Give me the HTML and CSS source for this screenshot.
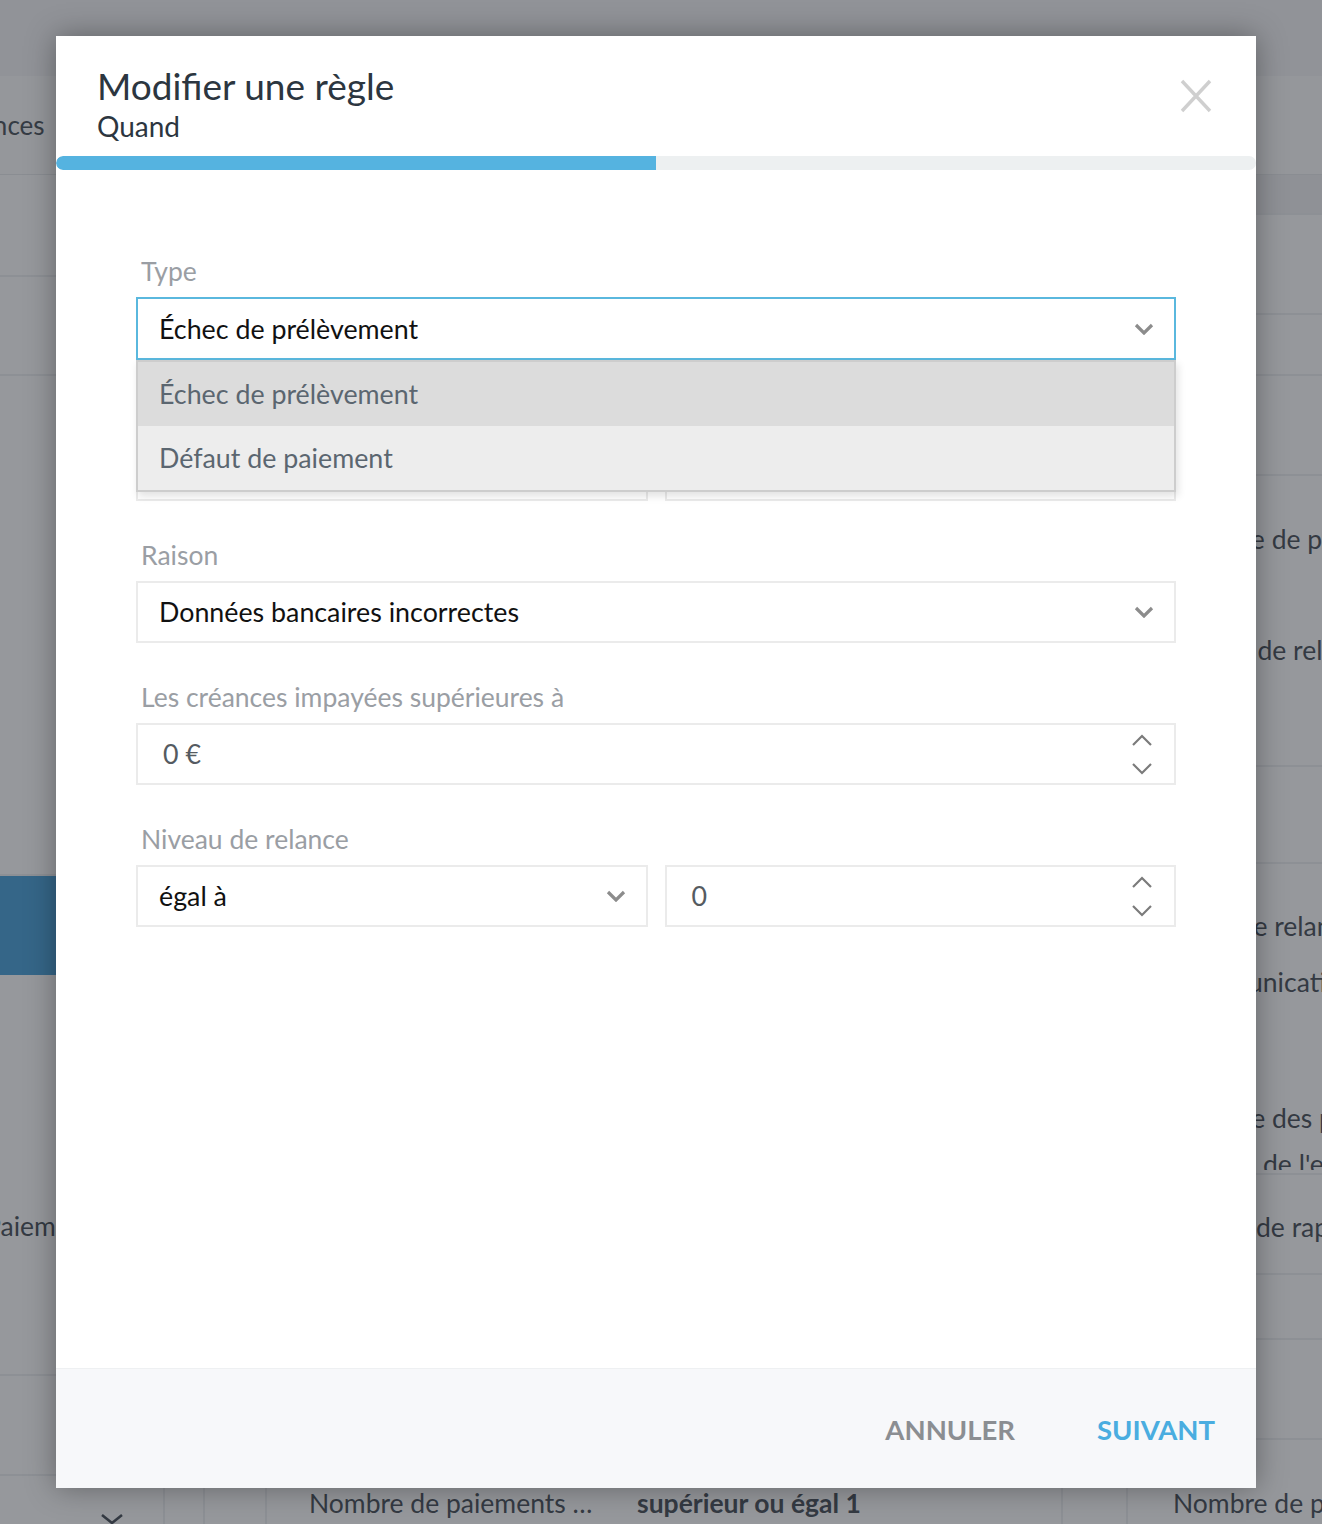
FILE: index.html
```html
<!DOCTYPE html>
<html lang="fr">
<head>
<meta charset="utf-8">
<title>Modifier une règle</title>
<link rel="stylesheet" href="styles.css">
</head>
<body>
<div class="page">
  <div class="page-header"></div>
  <div class="page-tabs"><span class="tab-text">Créances</span></div>
  <div class="page-main">
    <div class="col-left">
      <div class="lrow h102"></div>
      <div class="lrow h99"></div>
      <div class="lrow h500"></div>
      <div class="lrow h99 blue"></div>
      <div class="lrow h401"><span class="bg-text t-aieme">Paiements</span></div>
      <div class="lrow h100"></div>
      <div class="lrow last">
        <svg class="bg-chev" width="26" height="14" viewBox="0 0 26 14"><path d="M3 3 L13 11 L23 3" stroke="#3a434c" stroke-width="2.6" fill="none"/></svg>
      </div>
    </div>
    <div class="col-center">
      <div class="strip">
        <span class="cell c1"></span>
        <span class="cell c2"></span>
        <span class="cell c3">Nombre de paiements …</span>
        <span class="cell c4">supérieur ou égal 1</span>
      </div>
    </div>
    <div class="col-right">
      <div class="rrow h40 dark"></div>
      <div class="rrow h100"></div>
      <div class="rrow h61"></div>
      <div class="rrow h100"></div>
      <div class="rrow h291">
        <span class="bg-text r1">Type de prélèvement</span>
        <span class="bg-text r2">Niveau de relance</span>
      </div>
      <div class="rrow h97"></div>
      <div class="rrow h311">
        <span class="bg-text r3">Type de relance</span>
        <span class="bg-text r4">Communication</span>
        <span class="bg-text r5">Date des paiements</span>
        <span class="bg-text r6">Date de l'envoi</span>
      </div>
      <div class="rrow h100"><span class="bg-text r7">Date de rappel</span></div>
      <div class="rrow h65"></div>
      <div class="rrow h100"></div>
      <div class="rrow last">
        <div class="strip">
          <span class="cell c5"></span>
          <span class="cell c6">Nombre de paiements</span>
        </div>
      </div>
    </div>
  </div>
</div>

<div class="overlay"></div>

<div class="modal">
  <div class="modal-header">
    <div class="titles">
      <h1 class="title">Modifier une règle</h1>
      <div class="subtitle">Quand</div>
    </div>
    <button class="close" aria-label="Fermer">
      <svg width="34" height="34" viewBox="0 0 34 34"><path d="M3 2 L31 32 M31 2 L3 32" stroke="#cfcfcf" stroke-width="3.4" fill="none"/></svg>
    </button>
  </div>
  <div class="progress"><div class="progress-fill"></div></div>

  <div class="modal-body">
    <div class="field">
      <label class="label">Type</label>
      <div class="select-wrap">
        <div class="box focus">
          <span class="value">Échec de prélèvement</span>
          <svg class="chev" width="20" height="12" viewBox="0 0 20 12"><path d="M2 2 L10 10 L18 2" stroke="#8c8c8c" stroke-width="3.2" fill="none"/></svg>
        </div>
        <div class="dropdown">
          <div class="option active">Échec de prélèvement</div>
          <div class="option">Défaut de paiement</div>
        </div>
      </div>
    </div>

    <div class="field">
      <label class="label">Montant</label>
      <div class="row2">
        <div class="box"></div>
        <div class="box"></div>
      </div>
    </div>

    <div class="field">
      <label class="label">Raison</label>
      <div class="box">
        <span class="value">Données bancaires incorrectes</span>
        <svg class="chev" width="20" height="12" viewBox="0 0 20 12"><path d="M2 2 L10 10 L18 2" stroke="#8c8c8c" stroke-width="3.2" fill="none"/></svg>
      </div>
    </div>

    <div class="field">
      <label class="label">Les créances impayées supérieures à</label>
      <div class="box">
        <span class="value num">0 €</span>
        <span class="spin">
          <svg width="22" height="14" viewBox="0 0 22 14"><path d="M2 12 L11 3 L20 12" stroke="#7b7b7b" stroke-width="2.2" fill="none"/></svg>
          <svg width="22" height="14" viewBox="0 0 22 14"><path d="M2 2 L11 11 L20 2" stroke="#7b7b7b" stroke-width="2.2" fill="none"/></svg>
        </span>
      </div>
    </div>

    <div class="field">
      <label class="label">Niveau de relance</label>
      <div class="row2">
        <div class="box">
          <span class="value">égal à</span>
          <svg class="chev" width="20" height="12" viewBox="0 0 20 12"><path d="M2 2 L10 10 L18 2" stroke="#8c8c8c" stroke-width="3.2" fill="none"/></svg>
        </div>
        <div class="box">
          <span class="value num">0</span>
          <span class="spin">
            <svg width="22" height="14" viewBox="0 0 22 14"><path d="M2 12 L11 3 L20 12" stroke="#7b7b7b" stroke-width="2.2" fill="none"/></svg>
            <svg width="22" height="14" viewBox="0 0 22 14"><path d="M2 2 L11 11 L20 2" stroke="#7b7b7b" stroke-width="2.2" fill="none"/></svg>
          </span>
        </div>
      </div>
    </div>
  </div>

  <div class="modal-footer">
    <button class="btn cancel">ANNULER</button>
    <button class="btn next">SUIVANT</button>
  </div>
</div>
</body>
</html>
```

FILE: styles.css
```css
* { box-sizing: border-box; }
html, body { margin: 0; padding: 0; }
body {
  width: 1322px;
  height: 1524px;
  overflow: hidden;
  font-family: "Lato", "Open Sans", sans-serif;
  position: relative;
  background: #fff;
}

/* ---------- background page ---------- */
.page { width: 1322px; height: 1524px; display: flex; flex-direction: column; background: #fff; overflow: hidden; }
.page-header { height: 76px; background: #f4f5f6; flex: none; }
.page-tabs { height: 99px; background: #fcfcfd; flex: none; display: flex; align-items: center; border-bottom: 1px solid #e6e8ea; }
.tab-text { font-size: 26px; color: #3d464f; margin-left: -60px; }
.page-main { flex: 1; display: flex; min-height: 0; }
.col-left { width: 163px; flex: none; display: flex; flex-direction: column; }
.col-center { flex: 1; display: flex; flex-direction: column; justify-content: flex-end; }
.col-right { width: 261px; flex: none; display: flex; flex-direction: column; overflow: hidden; }
.lrow, .rrow { border-bottom: 2px solid #eceef0; flex: none; display: flex; flex-direction: column; }
.lrow.last, .rrow.last { border-bottom: none; flex: 1; }
.rrow.last { justify-content: flex-end; }
.h40 { height: 40px; } .h61 { height: 61px; } .h65 { height: 65px; } .h97 { height: 97px; }
.h99 { height: 99px; } .h100 { height: 100px; } .h102 { height: 102px; } .h291 { height: 291px; }
.h311 { height: 311px; } .h401 { height: 401px; } .h500 { height: 500px; }
.dark { background: #f0f1f3; }
.blue { background: #3d9ad6; border-bottom: none; }
.bg-text { font-size: 26.5px; color: #3a434c; white-space: nowrap; line-height: 32px; }
.t-aieme { margin-top: 235px; margin-left: -15px; }
.bg-chev { display: block; margin-left: 99px; margin-top: 36px; }
.r1 { margin-top: 47px; margin-left: 148px; }
.r2 { margin-top: 79px; margin-left: 108px; }
.r3 { margin-top: 46px; margin-left: 115px; }
.r4 { margin-top: 24px; margin-left: 111px; }
.r5 { margin-top: 104px; margin-left: 148px; }
.r6 { margin-top: 14px; margin-left: 139px; height: 22px; overflow: hidden; }
.r7 { margin-top: 36px; margin-left: 132px; }
.strip { height: 46px; display: flex; align-items: stretch; flex: none; overflow: hidden; }
.cell { font-size: 26.5px; color: #3a434c; line-height: 50px; white-space: nowrap; flex: none; }
.c1 { width: 40px; border-left: 2px solid #eceef0; }
.c2 { width: 62px; border-left: 2px solid #eceef0; }
.c3 { width: 372px; padding-left: 42px; border-left: 2px solid #eceef0; }
.c4 { font-weight: 700; }
.c5 { width: 65px; border-left: 2px solid #eceef0; }
.c6 { padding-left: 45px; border-left: 2px solid #eceef0; }

.overlay {
  position: absolute; inset: 0;
  background: rgba(45, 50, 58, 0.5);
}

/* ---------- modal ---------- */
.modal {
  position: absolute;
  left: 56px; top: 36px;
  width: 1200px; height: 1452px;
  background: #fff;
  display: flex; flex-direction: column;
  box-shadow: 0 0 28px rgba(0, 0, 0, 0.35);
}
.modal-header {
  height: 120px;
  display: flex; justify-content: space-between; align-items: flex-start;
  padding: 28px 42px 0 41px;
}
.title {
  margin: 0;
  font-size: 37px; font-weight: 400; line-height: 44px;
  color: #2c3640;
}
.subtitle { font-size: 28px; color: #2c3640; line-height: 36px; margin-top: 0; }
.close { background: none; border: none; padding: 0; margin-top: 15px; margin-right: 1px; width: 34px; height: 34px; cursor: pointer; }
.close svg { display: block; }

.progress { height: 14px; background: #edf0f1; border-radius: 7px; flex: none; overflow: hidden; }
.progress-fill { width: 600px; height: 100%; background: #55b3e0; border-radius: 7px 0 0 7px; }

.modal-body { flex: 1; padding: 86px 80px 0 80px; display: flex; flex-direction: column; }
.field { display: flex; flex-direction: column; margin-bottom: 39px; }
.label { font-size: 26.5px; line-height: 30px; color: #9a9ea4; padding-left: 5px; margin-bottom: 11px; white-space: nowrap; }
.select-wrap { position: relative; }
.box {
  height: 62px;
  border: 2px solid #ebebeb;
  display: flex; align-items: center; justify-content: space-between;
  padding: 0 20px 0 21px;
  background: #fff;
}
.box.focus { border-color: #5ab8de; height: 63px; margin-bottom: -1px; }
.value { font-size: 26.8px; color: #111; }
.value.num { color: #555b61; padding-left: 4px; }
.chev { display: block; }
.spin { display: flex; flex-direction: column; gap: 15px; margin-right: 1px; margin-top: 1px; }
.spin svg { display: block; }
.row2 { display: grid; grid-template-columns: 1fr 1fr; gap: 17px; }

.dropdown {
  position: absolute; left: 0; right: 0; top: 63px;
  border: 2px solid #cdcdcd;
  box-shadow: 2px 4px 8px rgba(0, 0, 0, 0.12);
  z-index: 2;
}
.option {
  height: 64px; display: flex; align-items: center;
  padding-left: 21px;
  font-size: 26.8px; color: #5b6670;
  background: #ededed;
}
.option.active { background: #dcdcdc; }

.modal-footer {
  height: 120px; flex: none;
  background: #f7f8fa; border-top: 1px solid #eef0f2;
  display: flex; justify-content: flex-end; align-items: center;
  padding-right: 41px; gap: 82px;
  padding-top: 2px;
}
.btn {
  background: none; border: none; padding: 0;
  font-family: inherit; font-size: 27.5px; font-weight: 700; letter-spacing: 0;
  cursor: pointer;
}
.cancel { color: #8b8e92; }
.next { color: #4aade0; }
```
